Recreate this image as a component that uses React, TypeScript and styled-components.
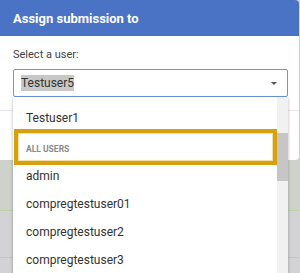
import React from 'react'
import styled, { createGlobalStyle } from 'styled-components'

const GlobalStyle = createGlobalStyle`
  html, body {
    margin: 0;
    padding: 0;
    font-family: Roboto, "Liberation Sans", Arial, sans-serif;
  }
  body {
    width: 300px;
    height: 273px;
    overflow: hidden;
    background: #d3d3d5;
  }
`

const Backdrop = styled.div`
  position: relative;
  width: 300px;
  height: 273px;
  overflow: hidden;
  display: flex;
  flex-direction: column;
`

const BackTop = styled.div`
  height: 210px;
  background: #cfd2cb;
  border-bottom: 1px solid #b9d3a8;
`

const BackRow = styled.div`
  height: 46px;
  background: #d3d3d5;
  border-bottom: 1px solid #c4c4c6;
`

const Modal = styled.div`
  position: absolute;
  top: 0;
  left: 0;
  width: 299px;
  height: 160px;
  background: #fff;
  border-radius: 0 4px 4px 0;
  display: flex;
  flex-direction: column;
`

const Header = styled.div`
  height: 36px;
  background: #4a73c6;
  border-radius: 0 4px 0 0;
  display: flex;
  align-items: center;
  padding: 0 13px;
  color: #fff;
  font-weight: 700;
  font-size: 13px;
`

const Body = styled.div`
  padding: 12px 11px 0 13px;
  height: 62px;
  border-bottom: 1px solid #e6e6e6;
`

const Label = styled.div`
  font-size: 11px;
  color: #444;
  height: 14px;
  line-height: 14px;
  margin-bottom: 7px;
`

const SelectWrap = styled.div`
  position: relative;
`

const SelectBox = styled.div`
  box-sizing: border-box;
  height: 28px;
  border: 1px solid #6e95e0;
  border-radius: 2px;
  display: flex;
  align-items: center;
  justify-content: space-between;
  padding: 0 10px 0 7px;
  font-size: 12px;
  color: #333;
`

const Selected = styled.span`
  background: #c8c8c8;
  padding: 1px 0;
`

const Caret = styled.span`
  width: 0;
  height: 0;
  border-left: 3px solid transparent;
  border-right: 3px solid transparent;
  border-top: 3px solid #555;
`

const Menu = styled.div`
  position: absolute;
  top: 28px;
  left: 0;
  width: 275px;
  height: 190px;
  background: #fff;
  box-shadow: 0 1px 3px rgba(0, 0, 0, 0.3);
  display: flex;
`

const List = styled.div`
  flex: 1;
  padding-top: 7px;
  position: relative;
`

const Item = styled.div`
  height: 28px;
  line-height: 28px;
  padding-left: 13px;
  font-size: 12px;
  color: #333;
`

const Group = styled.div`
  height: 30px;
  line-height: 34px;
  padding-left: 13px;
  font-size: 8.5px;
  font-weight: 700;
  color: #8a8a8a;
`

const Highlight = styled.div`
  position: absolute;
  top: 32px;
  left: 1px;
  width: 263px;
  height: 36px;
  box-sizing: border-box;
  border: 4px solid #d5a20e;
  box-shadow: inset 0 0 0 1px #f2dfa8;
`

const Track = styled.div`
  width: 11px;
  background: #f1f1f1;
  position: relative;
`

const Thumb = styled.div`
  position: absolute;
  top: 36px;
  left: 0;
  width: 11px;
  height: 48px;
  background: #c6c6c6;
`

const users = ['admin', 'compregtestuser01', 'compregtestuser2', 'compregtestuser3']

export default function App() {
  return (
    <>
      <GlobalStyle />
      <Backdrop>
        <BackTop />
        <BackRow />
        <Modal>
          <Header>Assign submission to</Header>
          <Body>
            <Label>Select a user:</Label>
            <SelectWrap>
              <SelectBox>
                <Selected>Testuser5</Selected>
                <Caret />
              </SelectBox>
              <Menu>
                <List>
                  <Item>Testuser1</Item>
                  <Group>ALL USERS</Group>
                  {users.map(u => (
                    <Item key={u}>{u}</Item>
                  ))}
                  <Highlight />
                </List>
                <Track>
                  <Thumb />
                </Track>
              </Menu>
            </SelectWrap>
          </Body>
        </Modal>
      </Backdrop>
    </>
  )
}
